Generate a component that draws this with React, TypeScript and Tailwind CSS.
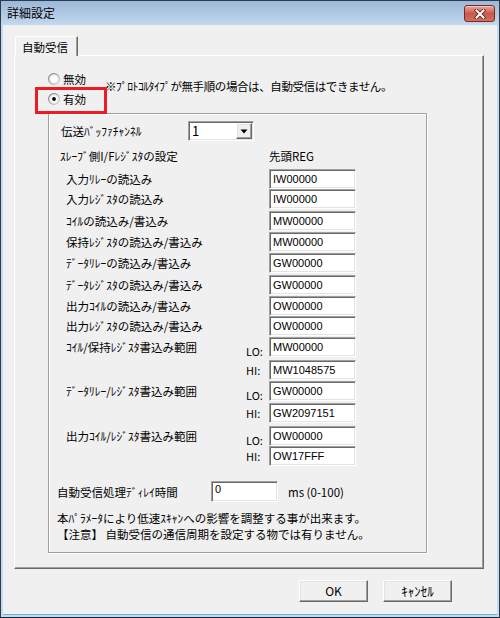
import React from 'react';

// 3D borders in the classic Windows look
const sunken =
    'bg-white border border-t-[#a0a0a0] border-l-[#a0a0a0] border-r-white border-b-white shadow-[inset_1px_1px_0_#696969,inset_-1px_-1px_0_#e3e3e3]';
const raised =
    'bg-[#f0f0f0] border border-t-white border-l-white border-r-[#696969] border-b-[#696969] shadow-[inset_-1px_-1px_0_#a0a0a0,inset_1px_1px_0_#e3e3e3]';
const latin = "font-['Liberation_Sans',Arial,sans-serif]";

interface RegRow {
    label: string;
    value: string;
    mt: string;
}

const readRows: RegRow[] = [
    { label: '入力ﾘﾚｰの読込み', value: 'IW00000', mt: 'mt-[4px]' },
    { label: '入力ﾚｼﾞｽﾀの読込み', value: 'IW00000', mt: 'mt-0' },
    { label: 'ｺｲﾙの読込み/書込み', value: 'MW00000', mt: 'mt-[2px]' },
    { label: '保持ﾚｼﾞｽﾀの読込み/書込み', value: 'MW00000', mt: 'mt-[1px]' },
    { label: 'ﾃﾞｰﾀﾘﾚｰの読込み/書込み', value: 'GW00000', mt: 'mt-[1px]' },
    { label: 'ﾃﾞｰﾀﾚｼﾞｽﾀの読込み/書込み', value: 'GW00000', mt: 'mt-[2px]' },
    { label: '出力ｺｲﾙの読込み/書込み', value: 'OW00000', mt: 'mt-[1px]' },
    { label: '出力ﾚｼﾞｽﾀの読込み/書込み', value: 'OW00000', mt: 'mt-0' },
];

interface RangeRow {
    label: string;
    lo: string;
    hi: string;
    mtLo: string;
    mtHi: string;
}

const rangeRows: RangeRow[] = [
    { label: 'ｺｲﾙ/保持ﾚｼﾞｽﾀ書込み範囲', lo: 'MW00000', hi: 'MW1048575', mtLo: 'mt-[1px]', mtHi: 'mt-[3px]' },
    { label: 'ﾃﾞｰﾀﾘﾚｰ/ﾚｼﾞｽﾀ書込み範囲', lo: 'GW00000', hi: 'GW2097151', mtLo: 'mt-[1px]', mtHi: 'mt-[2px]' },
    { label: '出力ｺｲﾙ/ﾚｼﾞｽﾀ書込み範囲', lo: 'OW00000', hi: 'OW17FFF', mtLo: 'mt-[3px]', mtHi: 'mt-0' },
];

const Radio: React.FC<{ checked?: boolean }> = ({ checked }) => (
    <svg width="12" height="12" viewBox="0 0 12 12" className="shrink-0">
        <defs>
            <linearGradient id={checked ? 'rs1' : 'rs0'} x1="0" y1="0" x2="1" y2="1">
                <stop offset="0" stopColor="#6f6f6f" />
                <stop offset="1" stopColor="#d6d6d6" />
            </linearGradient>
        </defs>
        <circle cx="6" cy="6" r="5.4" fill="#f7f7f7" stroke={`url(#${checked ? 'rs1' : 'rs0'})`} strokeWidth="1.1" />
        <circle cx="6" cy="6" r="4" fill="#ffffff" stroke="#dcdcdc" strokeWidth="0.6" />
        {checked && <circle cx="6" cy="6" r="1.9" fill="#000" />}
    </svg>
);

const Field: React.FC<{ value: string; className: string }> = ({ value, className }) => (
    <div className={`${sunken} ${className} ${latin} text-[11px] leading-[14px] pl-[3px] flex items-center`}>
        {value}
    </div>
);

const App: React.FC = () => {
    return (
        <div className="w-[500px] h-[618px] flex flex-col border border-[#2e3d4d] border-b-[#1b2530] bg-[#c6daef] font-['Noto_Sans_CJK_JP',sans-serif] text-[11.5px] leading-[14px] text-black overflow-hidden">
            {/* Title bar */}
            <div className="h-[24px] shrink-0 flex items-start justify-between bg-gradient-to-b from-[#9cb8d8] to-[#c4d8ee]">
                <span className="pl-[6px] h-[24px] flex items-center text-[12px]">詳細設定</span>
                <div className="mt-[4px] mr-[4px] w-[31px] h-[17px] rounded-[3px] border border-[#7a2a22] bg-gradient-to-b from-[#e8a99c] via-[#c9584a] to-[#d0705f] flex items-center justify-center shadow-[inset_0_1px_0_#f3c8bf]">
                    <svg width="12" height="10" viewBox="0 0 12 10">
                        <path d="M2.5 1.5 L9.5 8.5 M9.5 1.5 L2.5 8.5" stroke="#5a1d16" strokeWidth="3.6" strokeLinecap="square" />
                        <path d="M2.5 1.5 L9.5 8.5 M9.5 1.5 L2.5 8.5" stroke="#ffffff" strokeWidth="2" strokeLinecap="square" />
                    </svg>
                </div>
            </div>

            {/* Client area */}
            <div className="flex-1 mx-[2px] mb-[2px] bg-[#f0f0f0] border-b border-b-[#5ab9e4] flex flex-col pt-[11px] pl-[11px]">
                {/* Tab */}
                <div className="relative z-10 -mb-[1px] ml-[1px] w-[63px] h-[20px] bg-[#f0f0f0] border-t border-l border-r border-t-white border-l-white border-r-[#696969] shadow-[inset_-1px_0_0_#a0a0a0] flex items-center pl-[6px]">
                    自動受信
                </div>

                {/* Tab page */}
                <div className="relative w-[470px] h-[514px] border border-t-white border-l-white border-r-[#696969] border-b-[#696969] shadow-[inset_-1px_-1px_0_#a0a0a0]">
                    <div className="flex pt-[15px] pl-[33px]">
                        <div className="flex flex-col">
                            <div className="h-[16px] flex items-center gap-[3px]">
                                <Radio />
                                <span>無効</span>
                            </div>
                            <div className="mt-[4px] h-[16px] flex items-center gap-[3px]">
                                <Radio checked />
                                <span>有効</span>
                            </div>
                        </div>
                        <span className="ml-[19px] mt-[8px] whitespace-nowrap tracking-[-0.4px]">※ﾌﾟﾛﾄｺﾙﾀｲﾌﾟが無手順の場合は、自動受信はできません。</span>
                    </div>

                    {/* Highlight frame around 有効 */}
                    <div className="absolute left-[20px] top-[31px] w-[72px] h-[27px] border-[3px] border-[#ed1c24] z-10" />

                    {/* Group box */}
                    <div className="mt-[6px] ml-[33px] w-[379px] h-[440px] border border-[#a0a0a0] shadow-[inset_1px_1px_0_#ffffff,1px_1px_0_#ffffff] flex flex-col">
                        <div className="mt-[7px] pl-[12px] h-[20px] flex items-center">
                            <span className="w-[127px]">伝送ﾊﾞｯﾌｧﾁｬﾝﾈﾙ</span>
                            <div className={`${sunken} w-[66px] h-[20px] flex items-center justify-between pl-[3px] pr-[1px]`}>
                                <span className="text-[13px]">1</span>
                                <div className={`${raised} w-[16px] h-[16px] flex items-center justify-center`}>
                                    <svg width="8" height="5" viewBox="0 0 8 5">
                                        <path d="M0.5 0.5 L7.5 0.5 L4 4.5 Z" fill="#000" />
                                    </svg>
                                </div>
                            </div>
                        </div>

                        <div className="mt-[6px] pl-[11px] h-[18px] flex items-center">
                            <span className="w-[209px]">ｽﾚｰﾌﾞ側I/Fﾚｼﾞｽﾀの設定</span>
                            <span>先頭REG</span>
                        </div>

                        {readRows.map((row) => (
                            <div key={row.label} className={`${row.mt} pl-[17px] h-[20px] flex items-center`}>
                                <span className="w-[203px]">{row.label}</span>
                                <Field value={row.value} className="w-[87px] h-[20px]" />
                            </div>
                        ))}

                        {rangeRows.map((row) => (
                            <React.Fragment key={row.label}>
                                <div className={`${row.mtLo} pl-[17px] h-[20px] flex items-center`}>
                                    <span className="w-[180px]">{row.label}</span>
                                    <span className="w-[23px] self-end leading-[12px] text-[11px]">LO:</span>
                                    <Field value={row.lo} className="w-[87px] h-[20px]" />
                                </div>
                                <div className={`${row.mtHi} pl-[17px] h-[20px] flex items-center`}>
                                    <span className="w-[180px]" />
                                    <span className="w-[23px] text-[11px]">HI:</span>
                                    <Field value={row.hi} className="w-[87px] h-[20px]" />
                                </div>
                            </React.Fragment>
                        ))}

                        <div className="mt-[15px] pl-[8px] h-[21px] flex items-center">
                            <span className="w-[154px]">自動受信処理ﾃﾞｨﾚｲ時間</span>
                            <div className={`${sunken} w-[67px] h-[21px] pl-[3px] ${latin} text-[11px] leading-[14px]`}>0</div>
                            <span className="ml-[10px] text-[11.5px]">ms (0-100)</span>
                        </div>

                        <div className="mt-[9px] pl-[8px] flex flex-col gap-[1px] leading-[15px]">
                            <span>本ﾊﾟﾗﾒｰﾀにより低速ｽｷｬﾝへの影響を調整する事が出来ます。</span>
                            <span>【注意】 自動受信の通信周期を設定する物では有りません。</span>
                        </div>
                    </div>
                </div>

                {/* Buttons */}
                <div className="mt-[11px] flex justify-end gap-[15px] pr-[45px]">
                    <button className={`${raised} border-[#3c3c3c] border-t-[#3c3c3c] border-l-[#3c3c3c] shadow-[inset_-1px_-1px_0_#696969,inset_1px_1px_0_#ffffff,inset_-2px_-2px_0_#a0a0a0] w-[69px] h-[22px] text-[12px]`}>
                        OK
                    </button>
                    <button className={`${raised} w-[69px] h-[22px] text-[13px]`}>ｷｬﾝｾﾙ</button>
                </div>
            </div>
        </div>
    );
};

export default App;
